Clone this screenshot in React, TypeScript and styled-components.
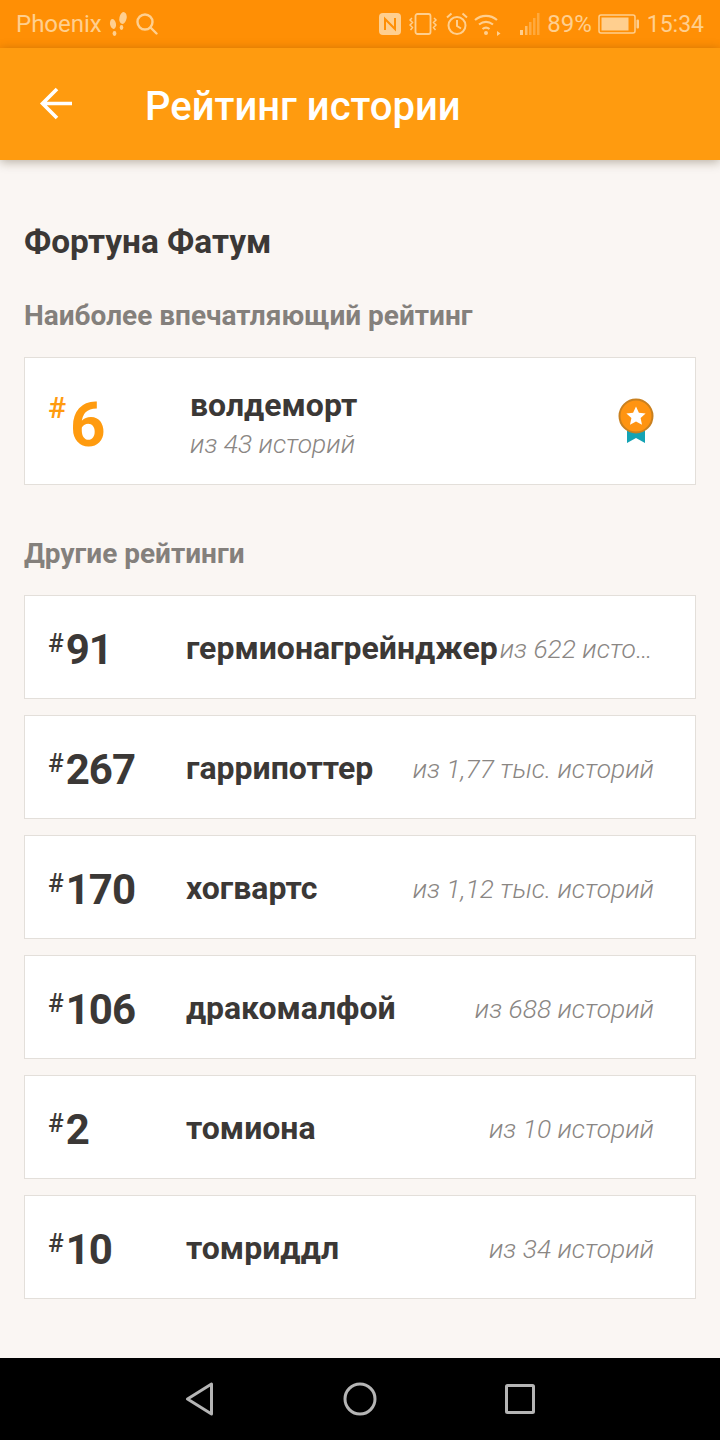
import styled, { createGlobalStyle } from "styled-components";

const GlobalStyle = createGlobalStyle`
  html, body {
    margin: 0;
    padding: 0;
    background: #faf6f3;
    font-family: Roboto, "Liberation Sans", sans-serif;
  }
`;

const Screen = styled.div`
  width: 720px;
  height: 1440px;
  display: flex;
  flex-direction: column;
  overflow: hidden;
  background: #faf6f3;
`;

const StatusBar = styled.div`
  height: 48px;
  flex: none;
  background: #ff8f05;
  color: #ffcf8f;
  display: flex;
  align-items: center;
  justify-content: space-between;
  padding: 0 16px;
  font-size: 24px;
`;

const StatusGroup = styled.div`
  display: flex;
  align-items: center;
  gap: 6px;
`;

const Clock = styled.span`
  font-size: 23px;
`;

const AppBar = styled.header`
  height: 112px;
  flex: none;
  background: #ff9b0f;
  box-shadow: 0 2px 10px rgba(60, 40, 10, 0.35);
  display: flex;
  align-items: center;
  position: relative;
  z-index: 1;
`;

const BackButton = styled.div`
  width: 145px;
  flex: none;
  padding-left: 39px;
  box-sizing: border-box;
  display: flex;
  align-items: center;
`;

const Title = styled.h1`
  margin: 0;
  padding-top: 4px;
  color: #fff;
  font-size: 40px;
  font-weight: 500;
`;

const Content = styled.main`
  flex: 1;
  padding: 62px 24px 0;
`;

const StoryName = styled.h2`
  margin: 0;
  height: 40px;
  line-height: 40px;
  color: #3b3836;
  font-size: 33.4px;
  font-weight: 700;
`;

const SectionLabel = styled.h3<{ $top: number }>`
  margin: ${(p) => p.$top}px 0 0;
  height: 36px;
  line-height: 36px;
  color: #84807c;
  font-size: 28px;
  font-weight: 700;
`;

const Card = styled.div<{ $height: number }>`
  height: ${(p) => p.$height}px;
  box-sizing: border-box;
  background: #fff;
  border: 1px solid #e3dfda;
  display: flex;
  align-items: center;
  padding: 0 41px 0 23px;
`;

const RowList = styled.div`
  display: flex;
  flex-direction: column;
  gap: 16px;
  margin-top: 23px;
`;

const BestCard = styled(Card)`
  margin-top: 23px;
`;

const Rank = styled.div<{ $width: number; $accent?: boolean }>`
  width: ${(p) => p.$width}px;
  flex: none;
  display: flex;
  align-items: flex-start;
  color: ${(p) => (p.$accent ? "#ff9b0f" : "#3b3836")};
`;

const Hash = styled.span<{ $size: number; $gap: number }>`
  font-size: ${(p) => p.$size}px;
  line-height: 1;
  font-weight: 500;
  margin-top: 6px;
  margin-right: ${(p) => p.$gap}px;
`;

const RankValue = styled.span<{ $size: number }>`
  font-size: ${(p) => p.$size}px;
  line-height: 1;
  font-weight: 700;
  letter-spacing: -1px;
  margin-top: ${(p) => Math.round(p.$size * 0.12)}px;
`;

const Name = styled.span`
  flex: none;
  padding-top: 2px;
  color: #3b3836;
  font-size: 32px;
  font-weight: 700;
`;

const Detail = styled.span`
  flex: 1;
  min-width: 0;
  margin-left: 2px;
  padding-top: 4px;
  color: #8a8683;
  font-size: 26.4px;
  font-weight: 300;
  font-style: italic;
  text-align: right;
  white-space: nowrap;
  overflow: hidden;
  text-overflow: ellipsis;
`;

const BestInfo = styled.div`
  flex: 1;
  display: flex;
  flex-direction: column;
`;

const BestDetail = styled(Detail)`
  flex: none;
  margin-left: 0;
  padding-top: 5px;
  text-align: left;
`;

const NavBar = styled.nav`
  height: 82px;
  flex: none;
  background: #000;
  display: flex;
  align-items: center;
  justify-content: center;
  gap: 128px;
  padding: 0 2px 1px 0;
  box-sizing: border-box;
`;

const statusStroke = "#ffcf8f";

function Steps() {
  return (
    <svg width="22" height="26" viewBox="0 0 22 26" fill={statusStroke}>
      <ellipse cx="15" cy="7" rx="3.6" ry="6" transform="rotate(12 15 7)" />
      <ellipse cx="13.500" cy="16.500" rx="1.800" ry="2.400" />
      <ellipse cx="5" cy="13" rx="3" ry="5" transform="rotate(-10 5 13)" />
      <ellipse cx="6.500" cy="22.500" rx="1.900" ry="2.400" />
    </svg>
  );
}

function Search() {
  return (
    <svg width="22" height="22" viewBox="0 0 22 22" fill="none" stroke={statusStroke} strokeWidth="2.400">
      <circle cx="9" cy="9" r="7.500" />
      <path d="M14.500 14.500l6 6" strokeLinecap="round" />
    </svg>
  );
}

function Nfc() {
  return (
    <svg width="24" height="22" viewBox="0 0 24 22">
      <rect x="0" y="0" width="22" height="22" rx="4" fill={statusStroke} />
      <path d="M6 17V6l10 10V5" fill="none" stroke="#ff8f05" strokeWidth="2" />
    </svg>
  );
}

function Vibrate() {
  return (
    <svg width="31" height="22" viewBox="0 0 31 22" fill="none" stroke={statusStroke} strokeWidth="1.800">
      <rect x="6.500" y="1" width="15" height="20" rx="2" />
      <path d="M3 5L1 7l2.500 2.500L1 12l2.500 2.500-2 2.500M25 5l2 2-2.500 2.500L27 12l-2.500 2.500 2 2.500" strokeWidth="1.500" />
    </svg>
  );
}

function Alarm() {
  return (
    <svg width="22" height="24" viewBox="0 0 22 24" fill="none" stroke={statusStroke} strokeWidth="2">
      <circle cx="11" cy="13.500" r="8.500" />
      <path d="M11 8v6l4 2.500M1 5.500L5.500 1.500M21 5.500L16.500 1.500" />
    </svg>
  );
}

function Wifi() {
  return (
    <svg width="27" height="24" viewBox="0 0 27 24" fill="none" stroke={statusStroke} strokeWidth="2.200">
      <path d="M1 8c6.500-5.500 15.500-5.500 22 0M5 12.500c4.500-3.500 9.500-3.500 14 0M8.500 17c2.500-2 4.500-2 7 0" />
      <circle cx="12" cy="21" r="2" fill={statusStroke} stroke="none" />
      <path d="M23 19l3.500 2.500L23 24z" fill={statusStroke} stroke="none" />
    </svg>
  );
}

function Signal() {
  return (
    <svg width="34" height="22" viewBox="0 0 34 22" fill={statusStroke}>
      <rect x="13" y="17" width="3" height="5" />
      <rect x="18" y="13" width="2.500" height="9" opacity="0.7" />
      <rect x="22" y="9" width="2.500" height="13" opacity="0.45" />
      <rect x="26" y="5" width="2.500" height="17" opacity="0.4" />
      <rect x="30" y="0" width="2.500" height="22" opacity="0.4" />
    </svg>
  );
}

function Battery() {
  return (
    <svg width="43" height="20" viewBox="0 0 43 20">
      <rect x="1" y="1" width="36" height="18" rx="2" fill="none" stroke={statusStroke} strokeWidth="1.500" />
      <rect x="3.500" y="3.500" width="27" height="13" fill={statusStroke} />
      <rect x="38.500" y="5.500" width="2.500" height="9" rx="1" fill={statusStroke} />
    </svg>
  );
}

function ArrowBack() {
  return (
    <svg width="36" height="36" viewBox="0 0 36 36" fill="none" stroke="#fff" strokeWidth="3.600">
      <path d="M33 17.500H4M18 3L3.500 17.500 18 32" />
    </svg>
  );
}

function Medal() {
  return (
    <svg width="36" height="46" viewBox="0 0 36 46">
      <path d="M9 26h18v19l-9-5-9 5z" fill="#14a3b4" />
      <circle cx="18" cy="18" r="16.500" fill="#ff9411" stroke="#c9801f" strokeWidth="2" />
      <path d="M18 8.500l2.900 6.200 6.700.8-5 4.600 1.400 6.700-6-3.400-6 3.400 1.400-6.700-5-4.600 6.700-.8z" fill="#fff" />
    </svg>
  );
}

const navStroke = "#b5b5b5";

function NavBack() {
  return (
    <svg width="32" height="34" viewBox="0 0 32 34" fill="none" stroke={navStroke} strokeWidth="3" strokeLinejoin="round">
      <path d="M28.500 2v30L4.500 17z" />
    </svg>
  );
}

function NavHome() {
  return (
    <svg width="34" height="34" viewBox="0 0 34 34" fill="none" stroke={navStroke} strokeWidth="3">
      <circle cx="17" cy="17" r="15" />
    </svg>
  );
}

function NavRecent() {
  return (
    <svg width="30" height="30" viewBox="0 0 30 30" fill="none" stroke={navStroke} strokeWidth="3" strokeLinejoin="round">
      <rect x="1.500" y="1.500" width="27" height="27" rx="1" />
    </svg>
  );
}

const ratings = [
  { rank: 91, tag: "гермионагрейнджер", total: "из 622 историй" },
  { rank: 267, tag: "гаррипоттер", total: "из 1,77 тыс. историй" },
  { rank: 170, tag: "хогвартс", total: "из 1,12 тыс. историй" },
  { rank: 106, tag: "дракомалфой", total: "из 688 историй" },
  { rank: 2, tag: "томиона", total: "из 10 историй" },
  { rank: 10, tag: "томриддл", total: "из 34 историй" },
];

export default function App() {
  return (
    <Screen>
      <GlobalStyle />
      <StatusBar>
        <StatusGroup>
          Phoenix
          <Steps />
          <Search />
        </StatusGroup>
        <StatusGroup>
          <Nfc />
          <Vibrate />
          <Alarm />
          <Wifi />
          <Signal />
          89%
          <Battery />
          <Clock>15:34</Clock>
        </StatusGroup>
      </StatusBar>
      <AppBar>
        <BackButton>
          <ArrowBack />
        </BackButton>
        <Title>Рейтинг истории</Title>
      </AppBar>
      <Content>
        <StoryName>Фортуна Фатум</StoryName>
        <SectionLabel $top={36}>Наиболее впечатляющий рейтинг</SectionLabel>
        <BestCard $height={128}>
          <Rank $width={142} $accent>
            <Hash $size={30} $gap={4}>#</Hash>
            <RankValue $size={62}>6</RankValue>
          </Rank>
          <BestInfo>
            <Name>волдеморт</Name>
            <BestDetail>из 43 историй</BestDetail>
          </BestInfo>
          <Medal />
        </BestCard>
        <SectionLabel $top={51}>Другие рейтинги</SectionLabel>
        <RowList>
          {ratings.map((r) => (
            <Card $height={104} key={r.tag}>
              <Rank $width={138}>
                <Hash $size={26} $gap={2}>#</Hash>
                <RankValue $size={42}>{r.rank}</RankValue>
              </Rank>
              <Name>{r.tag}</Name>
              <Detail>{r.total}</Detail>
            </Card>
          ))}
        </RowList>
      </Content>
      <NavBar>
        <NavBack />
        <NavHome />
        <NavRecent />
      </NavBar>
    </Screen>
  );
}
